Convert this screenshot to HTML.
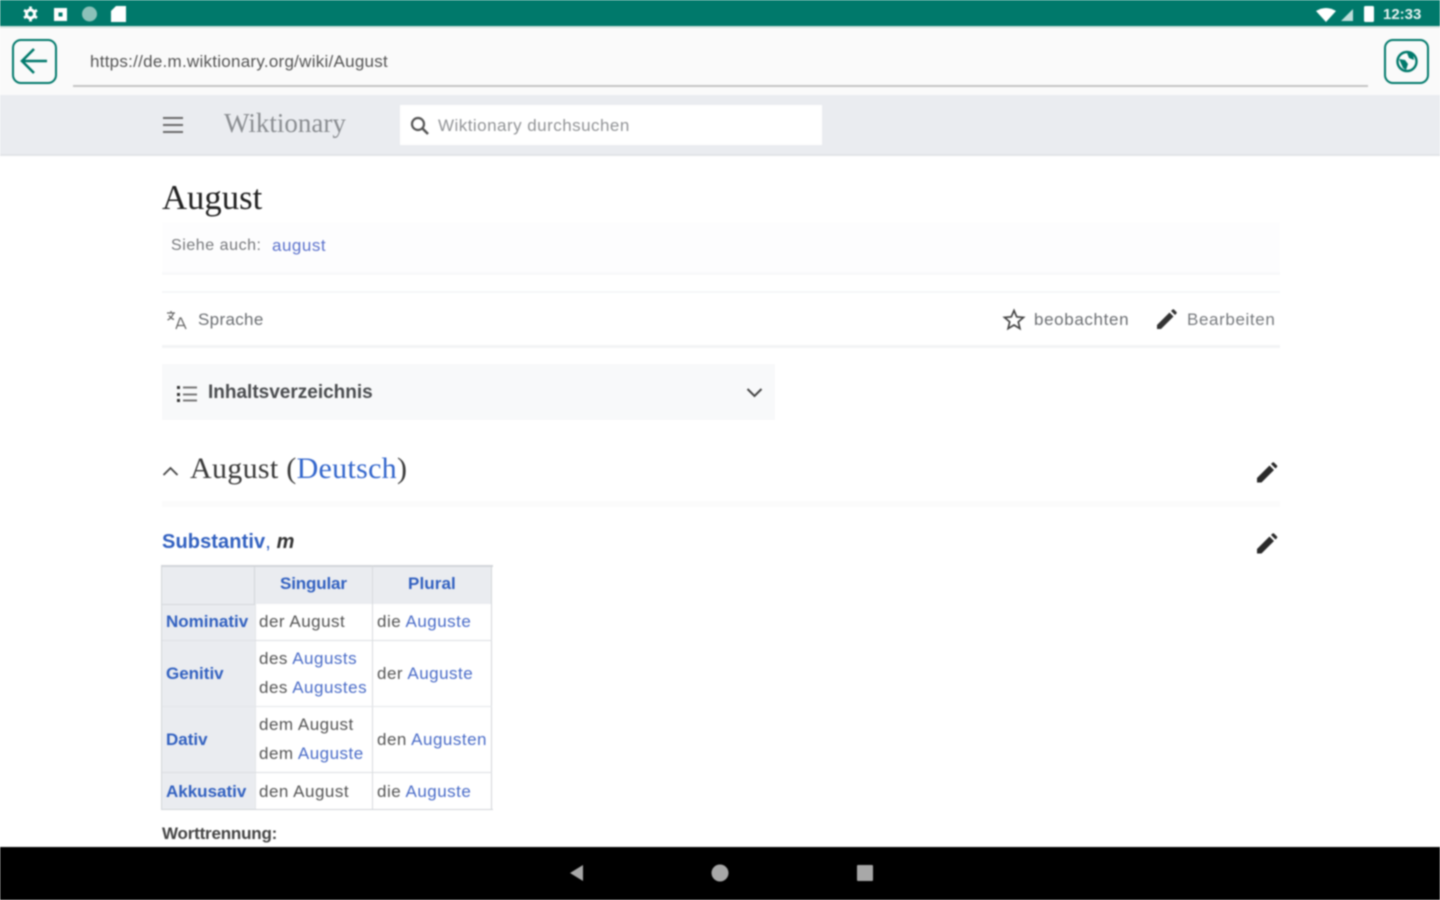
<!DOCTYPE html>
<html lang="de">
<head>
<meta charset="utf-8">
<title>August</title>
<style>
html,body{margin:0;padding:0;width:1440px;height:900px;overflow:hidden;background:#fff}
body{font-family:"Liberation Sans",sans-serif;color:#444}
#p{position:absolute;left:0;top:0;width:1440px;height:900px;overflow:hidden;filter:blur(.7px)}
.a{position:absolute;white-space:nowrap}
.s{font-family:"Liberation Serif",serif}
.l{color:#4a6cc8}
.b{position:absolute;background:#eaecf0}
svg{position:absolute;overflow:visible}
.t{font-size:17px;line-height:20px;color:#54595d}
.h{font-weight:700;color:#3160c0;font-size:17px;line-height:20px}
.c{font-size:17px;line-height:20px;color:#555;letter-spacing:.5px}
</style>
</head>
<body>
<div id="p">
<!-- status bar -->
<div class="b" style="left:0;top:0;width:1440px;height:26px;background:#00796b"></div>
<svg style="left:0;top:0" width="1440" height="26">
<g stroke="#fff" stroke-width="2.800"><path d="M30.500 6.500v3M30.500 18.500v3M24 10.200l2.600 1.500M34.400 16.300l2.600 1.500M37 10.200l-2.600 1.500M26.600 16.300L24 17.800"/></g>
<circle cx="30.500" cy="14" r="4" fill="none" stroke="#fff" stroke-width="3"/>
<path fill="#fff" fill-rule="evenodd" d="M54 8h13v13H54zM58.500 12.500v4h4v-4z"/>
<circle cx="89.500" cy="14" r="7.500" fill="#8cc1b9"/>
<path fill="#fff" d="M116 6h10v16h-15V11z"/>
<path fill="#fff" d="M1316 11q10-6 20 0l-10 11z"/>
<path fill="#fff" opacity=".75" d="M1341 21l12-12v12z"/>
<rect x="1364" y="6" width="10" height="16" rx="1.500" fill="#fff"/>
</svg>
<div class="a" style="left:1383px;top:6px;font-size:15px;line-height:17px;color:#e6f2f0;font-weight:700">12:33</div>

<!-- url bar -->
<div class="b" style="left:0;top:26px;width:1440px;height:69px;background:#fafafa"></div>
<div class="b" style="left:0;top:26px;width:1440px;height:2px;background:#d5e3e0"></div>
<svg style="left:0;top:26px" width="1440" height="69">
<rect x="13" y="14" width="43" height="43" rx="8" fill="none" stroke="#00796b" stroke-width="2"/>
<path d="M47 35H23M34 23L22 35l12 12" fill="none" stroke="#00796b" stroke-width="2.600"/>
<rect x="1385" y="14" width="43" height="43" rx="8" fill="none" stroke="#00796b" stroke-width="2"/>
<circle cx="1407" cy="35.500" r="9.500" fill="none" stroke="#00796b" stroke-width="2.400"/>
<path d="M1399 33l6 1 3 4-2 6-3-2zM1407 27l6 1 1 6-5-2z" fill="#00796b"/>
</svg>
<div class="a" style="left:90px;top:52px;font-size:17px;line-height:20px;color:#555;letter-spacing:.26px">https://de.m.wiktionary.org/wiki/August</div>
<div class="b" style="left:73px;top:85px;width:1295px;height:2px;background:#c4c4c4"></div>

<!-- header -->
<div class="b" style="left:0;top:95px;width:1440px;height:59px;background:#eaecf0"></div>
<div class="b" style="left:0;top:154px;width:1440px;height:2px;background:#e2e4e8"></div>
<div class="b" style="left:163px;top:117px;width:20px;height:2px;background:#6a6a6a"></div>
<div class="b" style="left:163px;top:124px;width:20px;height:2px;background:#6a6a6a"></div>
<div class="b" style="left:163px;top:131px;width:20px;height:2px;background:#6a6a6a"></div>
<div class="a s" style="left:224px;top:108px;font-size:27px;line-height:30px;color:#8a8d91">Wiktionary</div>
<div class="b" style="left:400px;top:105px;width:422px;height:40px;background:#fff"></div>
<svg style="left:400px;top:105px" width="40" height="40">
<circle cx="18" cy="19" r="6" fill="none" stroke="#555" stroke-width="2.200"/>
<path d="M22.500 23.500L28 29" stroke="#555" stroke-width="2.600"/>
</svg>
<div class="a" style="left:438px;top:116px;font-size:17px;line-height:20px;color:#929497;letter-spacing:.47px">Wiktionary durchsuchen</div>

<!-- title -->
<div class="a s" style="left:162px;top:179px;font-size:34.700px;line-height:38px;color:#222">August</div>
<div class="b" style="left:162px;top:222px;width:1118px;height:50px;background:#fdfdfe"></div>
<div class="a t" style="left:171px;top:236px;font-size:16px;letter-spacing:.55px;color:#77797c">Siehe auch:</div>
<div class="a l" style="left:272px;top:236px;font-size:17px;line-height:20px;letter-spacing:.5px;color:#5c72cc">august</div>
<div class="b" style="left:162px;top:272px;width:1118px;height:3px;background:#f8f9fa"></div>
<div class="b" style="left:162px;top:291px;width:1118px;height:2px;background:#f6f7f8"></div>
<div class="b" style="left:162px;top:345px;width:1118px;height:3px;background:#f3f4f5"></div>

<!-- actions -->
<svg style="left:165px;top:308px" width="26" height="24" fill="none" stroke="#666" stroke-width="1.300">
<path d="M2 5h8M6 3v2M8.500 5Q7 10 2.500 12M4 7.500q2 3 5 4"/>
<path d="M11 21l4-11h1l5 11M12.500 17.500h7"/>
</svg>
<div class="a t" style="left:198px;top:310px;letter-spacing:.33px;color:#6b6e72">Sprache</div>
<svg style="left:1003px;top:308px" width="24" height="24">
<path d="M11 2.500l2.700 6.300 6.800.6-5.200 4.500 1.600 6.700L11 17l-5.900 3.600 1.600-6.700L1.500 9.400l6.800-.6z" fill="none" stroke="#444" stroke-width="1.700"/>
</svg>
<div class="a t" style="left:1034px;top:310px;letter-spacing:.63px;color:#6b6e72">beobachten</div>
<svg style="left:1156px;top:308px" width="22" height="22">
<path fill="#333" d="M1 21V17L13.500 4.500l4 4L5 21zM15 3l1.500-1.500q.8-.6 1.500 0l2.500 2.500q.6.700 0 1.500L19 7z"/>
</svg>
<div class="a t" style="left:1187px;top:310px;letter-spacing:.62px;color:#777a7e">Bearbeiten</div>

<!-- toc -->
<div class="b" style="left:162px;top:364px;width:613px;height:56px;background:#f8f9fa"></div>
<svg style="left:177px;top:385px" width="22" height="20">
<g fill="#333"><rect x="0" y="1" width="3" height="3"/><rect x="0" y="8" width="3" height="3"/><rect x="0" y="14" width="3" height="3"/></g>
<g fill="#777"><rect x="6" y="1.500" width="14" height="2"/><rect x="6" y="8.500" width="14" height="2"/><rect x="6" y="14.500" width="14" height="2"/></g>
</svg>
<div class="a" style="left:208px;top:382px;font-size:19px;line-height:22px;font-weight:700;color:#4a4c4f">Inhaltsverzeichnis</div>
<svg style="left:745px;top:386px" width="20" height="14">
<path d="M2.500 3l7 7 7-7" fill="none" stroke="#444" stroke-width="2"/>
</svg>

<!-- section -->
<svg style="left:161px;top:463px" width="20" height="14">
<path d="M2.500 12l7-7 7 7" fill="none" stroke="#444" stroke-width="1.800"/>
</svg>
<div class="a s" style="left:190px;top:452px;font-size:30px;line-height:34px;color:#3a3a3a;letter-spacing:.3px">August (<span style="color:#3366cc">Deutsch</span>)</div>
<div class="b" style="left:162px;top:501px;width:1118px;height:6px;background:#fbfbfb"></div>
<svg style="left:1257px;top:462px" width="21" height="21">
<path fill="#2a2a2a" d="M0 20.500V16L12.500 3.500l4.500 4.500L4.500 20.500zM14 2l1.500-1.500q.8-.6 1.500 0l3 3q.6.700 0 1.500L18.500 6.500z"/>
</svg>
<svg style="left:1257px;top:533px" width="21" height="21">
<path fill="#2a2a2a" d="M0 20.500V16L12.500 3.500l4.500 4.500L4.500 20.500zM14 2l1.500-1.500q.8-.6 1.500 0l3 3q.6.700 0 1.500L18.500 6.500z"/>
</svg>
<div class="a" style="left:162px;top:530px;font-size:20px;line-height:24px;font-weight:700;color:#3160c0;letter-spacing:.1px">Substantiv<span style="font-weight:400">,</span> <i style="color:#333">m</i></div>

<!-- table -->
<div class="b" style="left:162px;top:566px;width:330px;height:244px;background:#fff"></div>
<div class="b" style="left:162px;top:566px;width:330px;height:38px;background:#eaecf0"></div>
<div class="b" style="left:162px;top:566px;width:93px;height:244px;background:#eaecf0"></div>
<!-- borders -->
<div class="b" style="left:161px;top:565px;width:332px;height:2px;background:#d2d5d9"></div>
<div class="b" style="left:161px;top:809px;width:332px;height:1px;background:#d2d5d9"></div>
<div class="b" style="left:161px;top:565px;width:1px;height:245px;background:#d2d5d9"></div>
<div class="b" style="left:491px;top:565px;width:1px;height:245px;background:#d2d5d9"></div>
<div class="b" style="left:254px;top:565px;width:1px;height:40px;background:#d2d5d9"></div>
<div class="b" style="left:255px;top:604px;width:1px;height:205px;background:#e4e6e9"></div>
<div class="b" style="left:372px;top:565px;width:1px;height:244px;background:#d8dadd"></div>
<div class="b" style="left:162px;top:604px;width:93px;height:1px;background:#d5d8dc"></div>
<div class="b" style="left:255px;top:640px;width:237px;height:1px;background:#dcdee1"></div>
<div class="b" style="left:162px;top:640px;width:93px;height:1px;background:#dfe1e5"></div>
<div class="b" style="left:162px;top:706px;width:330px;height:1px;background:#e4e6e9"></div>
<div class="b" style="left:162px;top:772px;width:330px;height:1px;background:#dcdee1"></div>

<div class="a h" style="left:280px;top:574px;letter-spacing:-.15px">Singular</div>
<div class="a h" style="left:408px;top:574px;letter-spacing:.1px">Plural</div>
<div class="a h" style="left:166px;top:612px">Nominativ</div>
<div class="a h" style="left:166px;top:664px">Genitiv</div>
<div class="a h" style="left:166px;top:730px">Dativ</div>
<div class="a h" style="left:166px;top:782px">Akkusativ</div>

<div class="a c" style="left:259px;top:612px">der August</div>
<div class="a c" style="left:377px;top:612px">die <span class="l">Auguste</span></div>
<div class="a c" style="left:259px;top:649px">des <span class="l">Augusts</span></div>
<div class="a c" style="left:259px;top:678px">des <span class="l">Augustes</span></div>
<div class="a c" style="left:377px;top:664px">der <span class="l">Auguste</span></div>
<div class="a c" style="left:259px;top:715px">dem August</div>
<div class="a c" style="left:259px;top:744px">dem <span class="l">Auguste</span></div>
<div class="a c" style="left:377px;top:730px">den <span class="l">Augusten</span></div>
<div class="a c" style="left:259px;top:782px">den August</div>
<div class="a c" style="left:377px;top:782px">die <span class="l">Auguste</span></div>

<div class="a" style="left:162px;top:824px;font-size:17px;line-height:20px;font-weight:700;color:#444;letter-spacing:-.2px">Worttrennung:</div>

<!-- nav -->
<div class="b" style="left:0;top:847px;width:1440px;height:53px;background:#000"></div>
<svg style="left:0;top:847px" width="1440" height="53">
<path d="M583 18v16l-13-8z" fill="#a8a8a8"/>
<circle cx="720" cy="26" r="8.500" fill="#a8a8a8"/>
<rect x="857" y="18" width="16" height="16" rx="1" fill="#a8a8a8"/>
</svg>
</div>
</body>
</html>
